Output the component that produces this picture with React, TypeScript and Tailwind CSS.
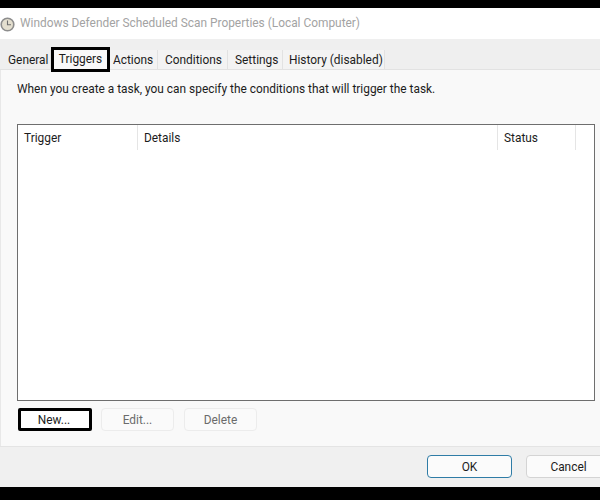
const TABS = [
  { label: "General", width: "w-[51px]", pad: "pl-[8px]" },
  { label: "Triggers", width: "w-[59px]", pad: "" },
  { label: "Actions", width: "w-[48px]", pad: "pl-[3px]" },
  { label: "Conditions", width: "w-[70px]", pad: "pl-[7px]" },
  { label: "Settings", width: "w-[55px]", pad: "pl-[7px]" },
  { label: "History (disabled)", width: "w-[102px]", pad: "pl-[6px]" },
];

function ClockIcon() {
  return (
    <svg width="15" height="15" viewBox="0 0 15 15" className="mt-px shrink-0">
      <circle cx="7.5" cy="7.5" r="6.3" fill="#e4dfcf" stroke="#8d8d8d" strokeWidth="1.6" />
      <path d="M7.5 3.6V7.8H11" fill="none" stroke="#6f6f6f" strokeWidth="1.1" />
    </svg>
  );
}

function ActionButton({ label }: { label: string }) {
  return (
    <div className="flex h-[23px] w-[73px] items-center justify-center rounded-[4px] border border-[#ececec] bg-[#fafafa] pt-[2px] text-[#6b6b6b]">
      {label}
    </div>
  );
}

export default function App() {
  return (
    <div className="flex h-[500px] w-[600px] flex-col overflow-hidden bg-black font-['Roboto',sans-serif] text-[11.9px] leading-none text-[#1c1c1c]">
      <div className="mt-[8px] flex h-[31px] items-center gap-[5px] bg-white text-[#a3a3a3]">
        <ClockIcon />
        <span className="pt-px">Windows Defender Scheduled Scan Properties (Local Computer)</span>
      </div>

      <div className="relative flex h-[31px] items-stretch border-b border-[#e2e2e2] bg-[#efefef]">
        {TABS.map((t) =>
          t.label === "Triggers" ? (
            <div
              key={t.label}
              className="relative z-10 mt-[8px] flex h-[25px] w-[59px] items-center justify-center border-[3px] border-black bg-[#f9f9f9]"
            >
              {t.label}
            </div>
          ) : (
            <div
              key={t.label}
              className={`mt-[11px] flex items-center whitespace-nowrap border-r border-[#e2e2e2] pt-[3px] ${t.width} ${t.pad} ${
                t.label === "General" ? "" : "bg-[#f3f3f3]"
              }`}
            >
              {t.label}
            </div>
          ),
        )}
      </div>

      <div className="flex h-[376px] flex-col border-l border-[#e8e8e8] bg-[#f9f9f9] pl-[16px] pr-[5px]">
        <p className="mt-[13px] h-[12px] whitespace-nowrap leading-[12px]">
          When you create a task, you can specify the conditions that will trigger the task.
        </p>
        <div className="mt-[29px] h-[277px] border border-[#6e6e6e] bg-white">
          <div className="flex h-[25px] items-center">
            <div className="flex h-full w-[120px] items-center border-r border-[#e5e5e5] pl-[6px] pt-[2px]">Trigger</div>
            <div className="flex h-full w-[360px] items-center border-r border-[#e5e5e5] pl-[6px] pt-[2px]">Details</div>
            <div className="flex h-full w-[78px] items-center border-r border-[#e5e5e5] pl-[6px] pt-[2px]">Status</div>
          </div>
        </div>
        <div className="mt-[7px] flex items-center">
          <div className="ml-[1px] flex h-[23px] w-[74px] items-center justify-center rounded-[2px] border-[3px] border-black bg-white pr-[2px] pt-[2px]">
            New...
          </div>
          <div className="ml-[9px]">
            <ActionButton label="Edit..." />
          </div>
          <div className="ml-[10px]">
            <ActionButton label="Delete" />
          </div>
        </div>
      </div>

      <div className="flex h-[41px] items-start gap-[14px] border-t border-[#e4e4e4] bg-[#f0f0f0] pl-[427px] pt-[8px]">
        <div className="flex h-[23px] w-[85px] shrink-0 items-center justify-center rounded-[4px] border border-[#2f7ca6] bg-[#fbfbfb] pt-[2px]">
          OK
        </div>
        <div className="flex h-[23px] w-[85px] shrink-0 items-center justify-center rounded-[4px] border border-[#d4d4d4] bg-[#fbfbfb] pt-[2px]">
          Cancel
        </div>
      </div>
    </div>
  );
}
